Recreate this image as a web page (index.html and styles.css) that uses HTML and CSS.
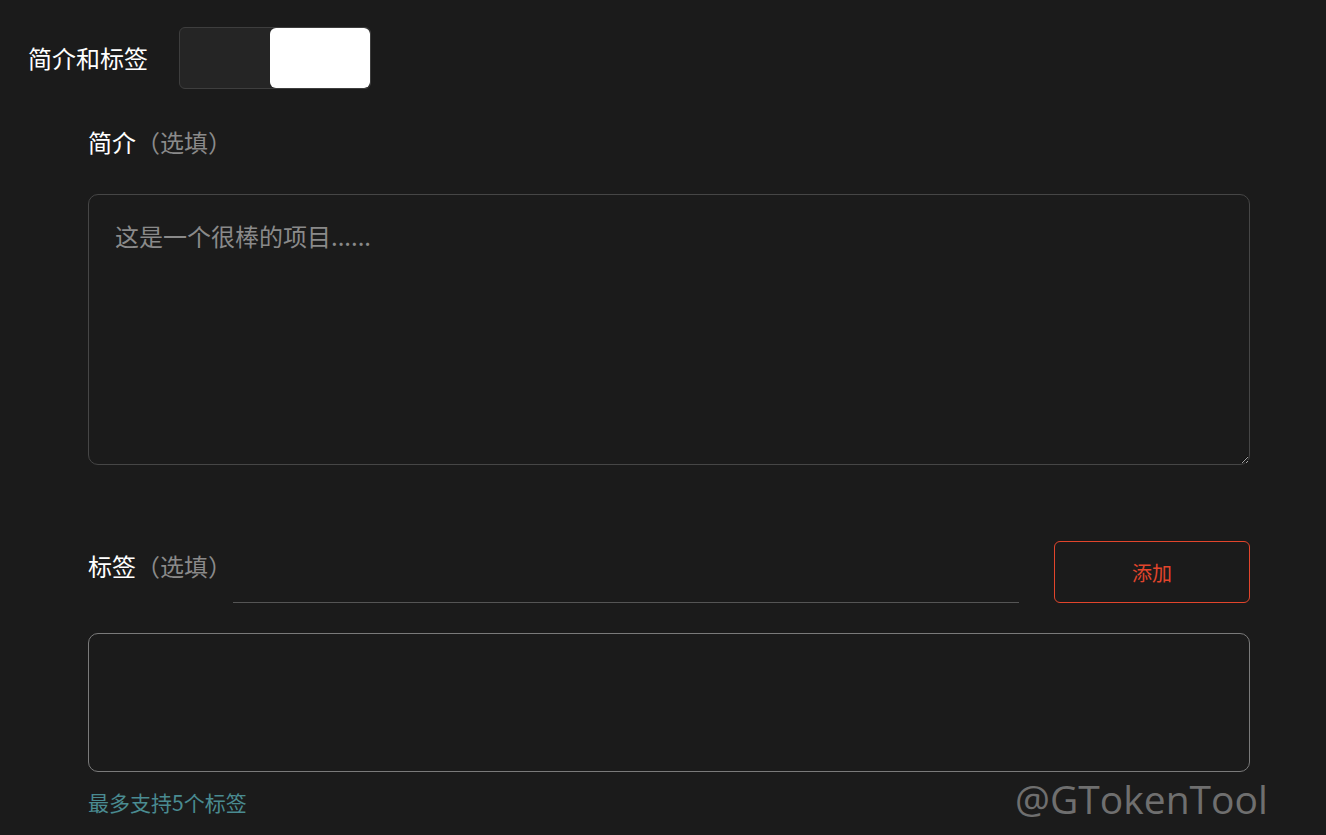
FILE: index.html
```html
<!DOCTYPE html>
<html lang="zh-CN">
<head>
<meta charset="utf-8">
<link rel="stylesheet" href="styles.css">
</head>
<body>
<div class="page">
  <div class="head">
    <span class="head-title">简介和标签</span>
    <div class="toggle">
      <div class="toggle-off"></div>
      <div class="toggle-on"></div>
    </div>
  </div>
  <div class="section">
    <div class="label">简介<span class="opt">（选填）</span></div>
    <textarea class="desc" placeholder="这是一个很棒的项目......"></textarea>
    <div class="tag-row">
      <div class="label tag-label">标签<span class="opt">（选填）</span></div>
      <input class="tag-input" type="text">
      <button class="add-btn">添加</button>
    </div>
    <div class="tag-box"></div>
    <div class="hint">最多支持5个标签</div>
  </div>
</div>
<div class="watermark">@GTokenTool</div>
</body>
</html>
```
FILE: styles.css
```css
html, body {
  margin: 0;
  padding: 0;
  background: #1b1b1b;
  height: 100%;
  overflow: hidden;
}
body {
  font-family: "Noto Sans CJK SC", "Noto Sans", sans-serif;
  color: #fff;
}
.page {
  padding: 27px 76px 0 28px;
}
.head {
  display: flex;
  align-items: center;
  gap: 31px;
}
.head-title {
  font-size: 24px;
  line-height: 34px;
}
.toggle {
  display: flex;
  width: 190px;
  height: 60px;
  border: 1px solid #3e3e3e;
  border-radius: 6px;
  background: #252525;
  overflow: hidden;
}
.toggle-off {
  flex: 1;
}
.toggle-on {
  width: 100px;
  background: #fff;
  border-radius: 6px;
}
.section {
  margin-left: 60px;
  display: flex;
  flex-direction: column;
}
.label {
  font-size: 24px;
  line-height: 34px;
  margin-top: 36px;
}
.opt {
  color: #8a8a8a;
}
.desc {
  margin-top: 35px;
  height: 271px;
  box-sizing: border-box;
  background: #1b1b1b;
  border: 1px solid #464646;
  border-radius: 10px;
  padding: 24px 26px;
  font-family: "Noto Sans CJK SC", "Noto Sans", sans-serif;
  font-size: 24px;
  line-height: 34px;
  color: #fff;
  outline: none;
  resize: vertical;
}
.desc::placeholder {
  color: #8a8a8a;
}
.tag-row {
  margin-top: 76px;
  display: flex;
  height: 62px;
}
.tag-label {
  margin-top: 8px;
  flex: none;
}
.tag-input {
  flex: 1;
  margin-left: 1px;
  background: transparent;
  border: none;
  border-bottom: 1px solid #555;
  outline: none;
  color: #fff;
  font-size: 20px;
  height: 62px;
  box-sizing: border-box;
}
.add-btn {
  margin-left: 35px;
  width: 196px;
  height: 62px;
  box-sizing: border-box;
  background: transparent;
  border: 1px solid #e2452c;
  border-radius: 6px;
  color: #e2452c;
  font-family: "Noto Sans CJK SC", "Noto Sans", sans-serif;
  font-size: 20px;
  padding: 0;
}
.tag-box {
  margin-top: 30px;
  height: 139px;
  box-sizing: border-box;
  border: 1px solid #7a7a7a;
  border-radius: 10px;
}
.hint {
  margin-top: 16px;
  font-size: 21px;
  line-height: 28px;
  color: #4a8b91;
}
.watermark {
  position: absolute;
  left: 1015px;
  top: 773px;
  font-family: "Open Sans", "Noto Sans", sans-serif;
  font-size: 39px;
  line-height: 52px;
  color: #6f6f6f;
}
```
